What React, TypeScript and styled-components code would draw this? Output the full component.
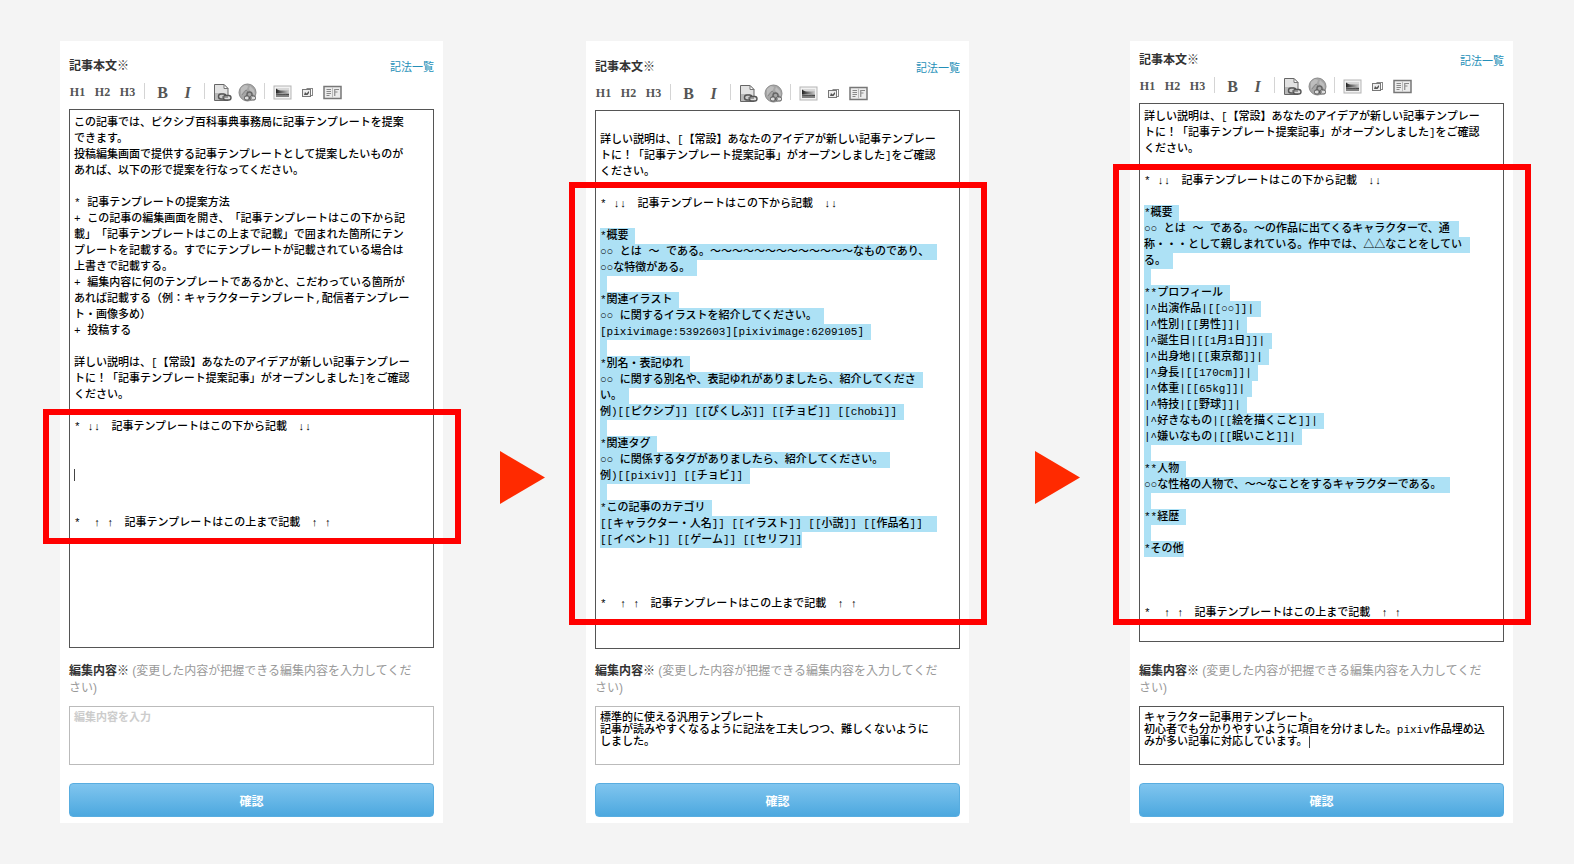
import React, { useId } from 'react';
import styled, { createGlobalStyle } from 'styled-components';

const UI_FONT = '"Liberation Sans", "Noto Sans CJK JP", sans-serif';
const EDITOR_FONT = '"Liberation Mono", "Noto Sans CJK JP", monospace';

const GlobalStyle = createGlobalStyle`
  *, *::before, *::after { box-sizing: border-box; }
  body {
    margin: 0;
    background: #f4f4f4;
    color: #333;
    font-family: ${UI_FONT};
  }
`;

const Steps = styled.main`
  display: grid;
  grid-template-columns: 383fr 143fr 383fr 161fr 383fr;
  padding: 41px 61px 41px 60px;
`;

const Panel = styled.form<{ $top: number }>`
  position: relative;
  display: flex;
  flex-direction: column;
  min-width: 0;
  padding: ${(p) => p.$top}px 9px 6px;
  background: #fff;
`;

const ArrowSlot = styled.div`
  display: flex;
  align-items: center;
  justify-content: center;
  padding: 90px 0 0 16px;
`;

const Header = styled.div`
  display: flex;
  align-items: flex-end;
  justify-content: space-between;
`;

const Title = styled.label`
  font-size: 12px;
  line-height: 18px;
  font-weight: 700;
`;

const HelpLink = styled.a`
  font-size: 11px;
  line-height: 16px;
  color: #258fb8;
  text-decoration: none;
`;

const Toolbar = styled.div`
  display: flex;
  height: 25px;
  margin: 5px 0 4px -4px;
`;

const Tool = styled.button<{ $size?: number; $italic?: boolean }>`
  display: flex;
  align-items: center;
  justify-content: center;
  width: 25px;
  padding: 0;
  border: 0;
  background: none;
  color: #555;
  font: ${(p) => (p.$italic ? 'italic' : 'normal')} 700 ${(p) => p.$size ?? 12}px "Liberation Serif", serif;
`;

const Divider = styled.span`
  width: 1px;
  height: 16px;
  margin: 3px 5px 0 4px;
  background: #d4d4d4;
`;

const Field = styled.div<{ $line: number }>`
  position: relative;
  font-family: ${EDITOR_FONT};
  font-size: 11px;
  font-weight: 500;
  line-height: ${(p) => p.$line}px;
  text-spacing-trim: space-all;
`;

const TextArea = styled.textarea<{ $dark?: boolean }>`
  position: relative;
  display: block;
  width: 100%;
  margin: 0;
  padding: 5px 4px 4px;
  overflow: hidden;
  resize: none;
  border: 1px solid ${(p) => (p.$dark ? '#555' : '#bbb')};
  border-radius: 0;
  outline: 0;
  background: transparent;
  color: #000;
  font: inherit;
  text-spacing-trim: inherit;
  white-space: pre;
  &::placeholder { color: #ccc; font-weight: 700; opacity: 1; }
`;

const Selection = styled.div`
  position: absolute;
  inset: 6px 5px auto;
`;

const SelectedLine = styled.div`
  height: 16px;
  background: #ade1f5;
`;

const Caret = styled.span`
  position: absolute;
  left: 5px;
  top: 6px;
  width: 1px;
  height: 12px;
  background: #444;
`;

const Footer = styled.div`
  display: flex;
  flex-direction: column;
  margin-top: auto;
  padding-top: 14px;
`;

const SummaryLabel = styled.label`
  margin-bottom: 9px;
  font-size: 12px;
  line-height: 17px;
  color: #999;
  white-space: nowrap;
  b { color: #333; }
`;

const Submit = styled.button`
  height: 34px;
  margin-top: 18px;
  border: 1px solid #58ade0;
  border-radius: 4px;
  background: linear-gradient(#80c5ef, #4ca8df);
  color: #fff;
  font: 700 12px ${UI_FONT};
`;

const Frame = styled.div<{ $top: number; $height: number }>`
  position: absolute;
  top: ${(p) => p.$top}px;
  left: -17px;
  right: -18px;
  height: ${(p) => p.$height}px;
  border: 6px solid #f00;
  pointer-events: none;
`;

/* Width of a line in em: ASCII, circles and arrows use the monospace advance. */
const measure = (text: string) =>
  [...text].reduce((w, c) => w + (c.charCodeAt(0) < 128 || '○↑↓'.includes(c) ? 0.6 : 1), 0);

const FileLinkIcon = () => (
  <svg width="19" height="19" viewBox="0 0 19 19" aria-hidden="true">
    <path d="M1.5 1.5h9.5l4 4v12h-13.5z" fill="#e2e2e2" stroke="#666" />
    <path d="M2 10h9v7H2z" fill="#b8b8b8" />
    <path d="M11 1.5v4h4z" fill="#fff" stroke="#777" />
    <rect x="5.500" y="11" width="7.500" height="5" rx="2.500" fill="#ccc" stroke="#555" strokeWidth="1.400" />
    <rect x="10.500" y="12.500" width="7.500" height="4.500" rx="2.200" fill="#ddd" stroke="#555" strokeWidth="1.400" />
    <path d="M9 14h6" stroke="#777" strokeWidth="1.300" />
  </svg>
);

const GlobeLinkIcon = () => (
  <svg width="19" height="19" viewBox="0 0 19 19" aria-hidden="true">
    <circle cx="9.500" cy="9.500" r="8.500" fill="#a6a6a6" stroke="#8c8c8c" />
    <path d="M3 5l4-3 3 1-1 3-3 2-3 4zM12 3l4 4 1 5-4-3-2-3z" fill="#bdbdbd" />
    <path d="M4 12l4-5 3 3" fill="none" stroke="#8a8a8a" />
    <path d="M9 13v-1.500a2.500 2.500 0 0 1 5 0V13" fill="none" stroke="#666" strokeWidth="1.500" />
    <rect x="6.500" y="13" width="5" height="4" rx="1.500" fill="#ddd" stroke="#555" />
    <rect x="12" y="13" width="5.500" height="4" rx="1.500" fill="#ddd" stroke="#555" />
    <path d="M10 15h4" stroke="#555" />
  </svg>
);

const ImageIcon = ({ id }: { id: string }) => (
  <svg width="19" height="15" viewBox="0 0 19 15" aria-hidden="true">
    <defs>
      <linearGradient id={id} x1="0" x2="1">
        <stop offset="0" stopColor="#222" />
        <stop offset="1" stopColor="#ccc" />
      </linearGradient>
    </defs>
    <rect x="1" y="1" width="17" height="13" fill="#f2f2f2" stroke="#b5b5b5" />
    <rect x="3" y="3" width="13" height="9" fill="#d8d8d8" />
    <path d="M3 3.500c3 2.500 7 2.500 13 1.500v3H3z" fill={`url(#${id})`} />
    <path d="M3 8c4 1 9 .5 13 .5V12H3z" fill="#808080" />
    <path d="M3 9c4 .5 8 0 13 .5" stroke="#444" fill="none" />
  </svg>
);

const SmallImageIcon = () => (
  <svg width="13" height="11" viewBox="0 0 13 11" aria-hidden="true">
    <rect x="6" y="1.500" width="5.500" height="7" fill="#fff" stroke="#888" />
    <rect x="1.500" y="2.500" width="8" height="7" fill="#eee" stroke="#777" />
    <path d="M3 8l1-3 1.500 1.500L8 4v2l-1.500 2z" fill="#555" />
  </svg>
);

const BookIcon = () => (
  <svg width="19" height="15" viewBox="0 0 19 15" aria-hidden="true">
    <rect x="1" y="1.500" width="17" height="12" fill="#ececec" stroke="#777" strokeWidth="1.500" />
    <path d="M9.500 2.500v10" stroke="#bbb" />
    <path d="M3.500 4.500h4.500M3.500 6.500h4.500M3.500 8.500h4.500M3.500 10.500h3" stroke="#888" />
    <path d="M11 4.500h5M11 7h3.500" stroke="#888" />
    <path d="M11.700 4v7" stroke="#999" strokeWidth="1.400" />
  </svg>
);

const NextArrow = () => (
  <ArrowSlot>
    <svg width="45" height="53" viewBox="0 0 45 53" aria-hidden="true">
      <path d="M0 0L45 26.500L0 53z" fill="#ff2a00" />
    </svg>
  </ArrowSlot>
);

interface Step {
  top: number;
  body: string[];
  selected?: [number, number];
  caretLine?: number;
  summary: string[];
  summaryActive?: boolean;
  frame: { top: number; height: number };
}

const GUIDE = [
  '詳しい説明は、[【常設】あなたのアイデアが新しい記事テンプレー',
  'トに！「記事テンプレート提案記事」がオープンしました]をご確認',
  'ください。',
  '',
  '* ↓↓　記事テンプレートはこの下から記載　↓↓',
];
const END = '*  ↑ ↑　記事テンプレートはこの上まで記載　↑ ↑';

const STEPS: Step[] = [
  {
    top: 16,
    body: [
      'この記事では、ピクシブ百科事典事務局に記事テンプレートを提案',
      'できます。',
      '投稿編集画面で提供する記事テンプレートとして提案したいものが',
      'あれば、以下の形で提案を行なってください。',
      '',
      '* 記事テンプレートの提案方法',
      '+ この記事の編集画面を開き、「記事テンプレートはこの下から記',
      '載」「記事テンプレートはこの上まで記載」で囲まれた箇所にテン',
      'プレートを記載する。すでにテンプレートが記載されている場合は',
      '上書きで記載する。',
      '+ 編集内容に何のテンプレートであるかと、こだわっている箇所が',
      'あれば記載する（例：キャラクターテンプレート,配信者テンプレー',
      'ト・画像多め）',
      '+ 投稿する',
      '',
      ...GUIDE,
      '', '', '', '', '',
      END,
    ],
    caretLine: 22,
    summary: [],
    frame: { top: 368, height: 135 },
  },
  {
    top: 17,
    body: [
      '',
      ...GUIDE,
      '',
      '*概要',
      '○○ とは 〜 である。〜〜〜〜〜〜〜〜〜〜〜〜〜なものであり、',
      '○○な特徴がある。',
      '',
      '*関連イラスト',
      '○○ に関するイラストを紹介してください。',
      '[pixivimage:5392603][pixivimage:6209105]',
      '',
      '*別名・表記ゆれ',
      '○○ に関する別名や、表記ゆれがありましたら、紹介してくださ',
      'い。',
      '例)[[ピクシブ]] [[ぴくしぶ]] [[チョビ]] [[chobi]]',
      '',
      '*関連タグ',
      '○○ に関係するタグがありましたら、紹介してください。',
      '例)[[pixiv]] [[チョビ]]',
      '',
      '*この記事のカテゴリ',
      '[[キャラクター・人名]] [[イラスト]] [[小説]] [[作品名]] ',
      '[[イベント]] [[ゲーム]] [[セリフ]]',
      '', '', '',
      END,
    ],
    selected: [7, 26],
    summary: [
      '標準的に使える汎用テンプレート',
      '記事が読みやすくなるように記法を工夫しつつ、難しくないように',
      'しました。',
    ],
    frame: { top: 141, height: 443 },
  },
  {
    top: 10,
    body: [
      ...GUIDE,
      '',
      '*概要',
      '○○ とは 〜 である。〜の作品に出てくるキャラクターで、通',
      '称・・・として親しまれている。作中では、△△なことをしてい',
      'る。',
      '',
      '**プロフィール',
      '|^出演作品|[[○○]]|',
      '|^性別|[[男性]]|',
      '|^誕生日|[[1月1日]]|',
      '|^出身地|[[東京都]]|',
      '|^身長|[[170cm]]|',
      '|^体重|[[65kg]]|',
      '|^特技|[[野球]]|',
      '|^好きなもの|[[絵を描くこと]]|',
      '|^嫌いなもの|[[眠いこと]]|',
      '',
      '**人物',
      '○○な性格の人物で、〜〜なことをするキャラクターである。',
      '',
      '**経歴',
      '',
      '*その他',
      '', '', '',
      END,
    ],
    selected: [6, 27],
    summary: [
      'キャラクター記事用テンプレート。',
      '初心者でも分かりやすいように項目を分けました。pixiv作品埋め込',
      'みが多い記事に対応しています。',
    ],
    summaryActive: true,
    frame: { top: 123, height: 461 },
  },
];

const EditorPanel = ({ step }: { step: Step }) => {
  const id = useId();
  const [from, to] = step.selected ?? [0, -1];
  const lastSummary = step.summary.length - 1;
  return (
    <Panel $top={step.top} lang="ja" onSubmit={(e) => e.preventDefault()}>
      <Header>
        <Title htmlFor={`${id}-body`}>記事本文※</Title>
        <HelpLink href="#syntax">記法一覧</HelpLink>
      </Header>
      <Toolbar>
        <Tool type="button">H1</Tool>
        <Tool type="button">H2</Tool>
        <Tool type="button">H3</Tool>
        <Divider />
        <Tool type="button" $size={16}>B</Tool>
        <Tool type="button" $size={16} $italic>I</Tool>
        <Divider />
        <Tool type="button" aria-label="記事リンク"><FileLinkIcon /></Tool>
        <Tool type="button" aria-label="外部リンク"><GlobeLinkIcon /></Tool>
        <Divider />
        <Tool type="button" aria-label="画像"><ImageIcon id={`${id}-image`} /></Tool>
        <Tool type="button" aria-label="小さい画像"><SmallImageIcon /></Tool>
        <Tool type="button" aria-label="小説"><BookIcon /></Tool>
      </Toolbar>
      <Field $line={16}>
        {step.selected && (
          <Selection>
            {step.body.slice(0, to + 1).map((line, i) => (
              <SelectedLine
                key={i}
                style={{ width: i < from ? 0 : `${measure(line) + (i < to ? 0.6 : 0)}em` }}
              />
            ))}
          </Selection>
        )}
        <TextArea
          id={`${id}-body`}
          rows={33}
          wrap="off"
          spellCheck={false}
          $dark
          defaultValue={step.body.join('\n')}
        />
        {step.caretLine !== undefined && (
          <Caret style={{ transform: `translateY(${step.caretLine * 16 + 2}px)` }} />
        )}
      </Field>
      <Footer>
        <SummaryLabel htmlFor={`${id}-summary`}>
          <b>編集内容※</b> (変更した内容が把握できる編集内容を入力してくだ
          <br />
          さい)
        </SummaryLabel>
        <Field $line={12}>
          <TextArea
            id={`${id}-summary`}
            rows={4}
            wrap="off"
            spellCheck={false}
            $dark={step.summaryActive}
            placeholder="編集内容を入力"
            defaultValue={step.summary.join('\n')}
          />
          {step.summaryActive && (
            <Caret
              style={{ transform: `translate(${measure(step.summary[lastSummary])}em, ${lastSummary * 12}px)` }}
            />
          )}
        </Field>
        <Submit type="submit">確認</Submit>
      </Footer>
      <Frame $top={step.frame.top} $height={step.frame.height} />
    </Panel>
  );
};

export default function App() {
  return (
    <>
      <GlobalStyle />
      <Steps>
        {STEPS.map((step, i) => (
          <React.Fragment key={i}>
            {i > 0 && <NextArrow />}
            <EditorPanel step={step} />
          </React.Fragment>
        ))}
      </Steps>
    </>
  );
}
